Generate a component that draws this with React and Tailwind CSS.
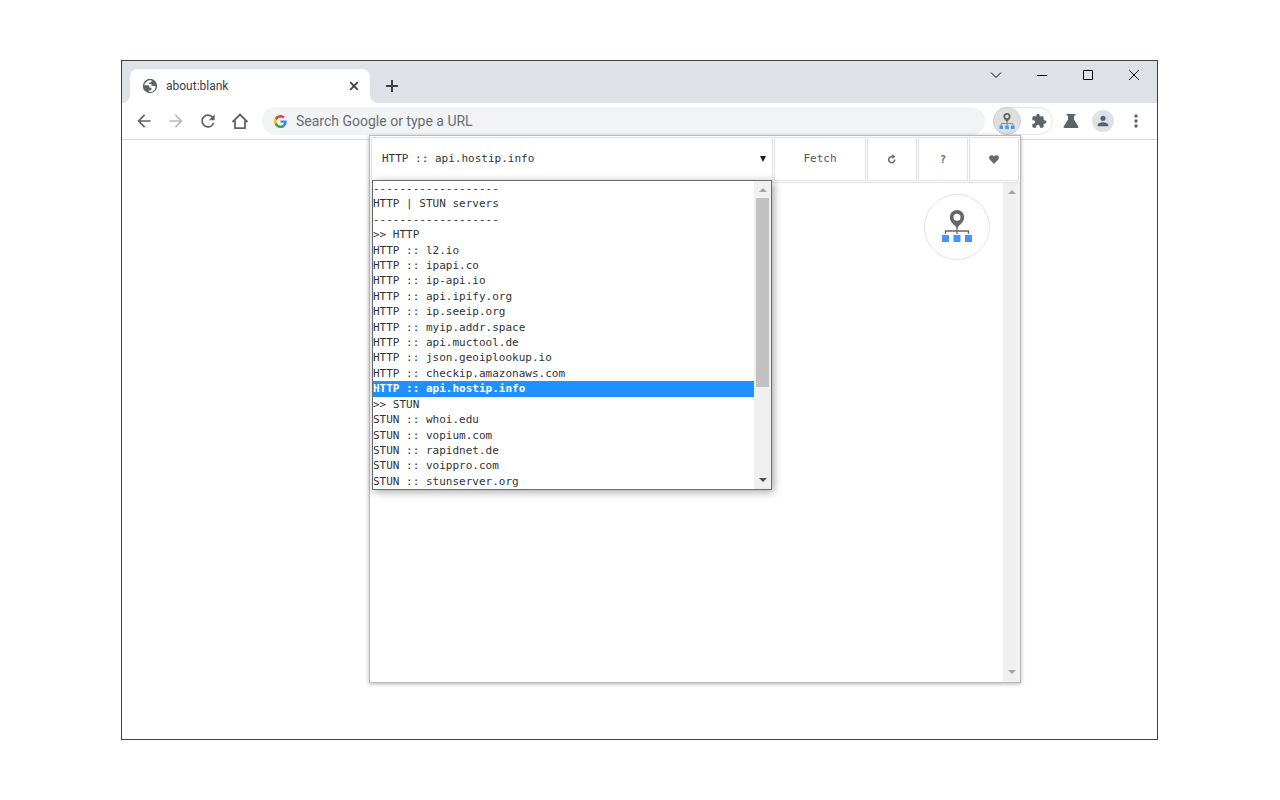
import React from "react";
import {
  MdArrowBack,
  MdArrowForward,
  MdRefresh,
  MdExtension,
  MdPerson,
  MdMoreVert,
} from "react-icons/md";

const SERVERS = [
  "-------------------",
  "HTTP | STUN servers",
  "-------------------",
  ">> HTTP",
  "HTTP :: l2.io",
  "HTTP :: ipapi.co",
  "HTTP :: ip-api.io",
  "HTTP :: api.ipify.org",
  "HTTP :: ip.seeip.org",
  "HTTP :: myip.addr.space",
  "HTTP :: api.muctool.de",
  "HTTP :: json.geoiplookup.io",
  "HTTP :: checkip.amazonaws.com",
  "HTTP :: api.hostip.info",
  ">> STUN",
  "STUN :: whoi.edu",
  "STUN :: vopium.com",
  "STUN :: rapidnet.de",
  "STUN :: voippro.com",
  "STUN :: stunserver.org",
];

const SELECTED = "HTTP :: api.hostip.info";

/* Map pin above three network nodes */
const NetworkPin = ({ className }) => (
  <svg viewBox="0 0 32 34" className={className} aria-hidden="true">
    <path
      fillRule="evenodd"
      fill="#666"
      d="M16 0a7.200 7.200 0 0 0-7.200 7.200c0 2.800 1.500 5 3.300 6.800 1.500 1.500 3 2.600 3.900 4.200.9-1.600 2.400-2.700 3.900-4.200 1.800-1.800 3.300-4 3.300-6.800A7.200 7.200 0 0 0 16 0zm0 3.700a3.500 3.500 0 1 1 0 7 3.500 3.500 0 0 1 0-7z"
    />
    <path d="M4.500 24v-3h23v3M16 16v8" fill="none" stroke="#666" strokeWidth="1.300" />
    <path d="M1 25h7v7H1zM12.500 25h7v7h-7zM24 25h7v7h-7z" fill="#4096fb" />
  </svg>
);

const GoogleLogo = () => (
  <svg viewBox="0 0 48 48" className="h-[13px] w-[13px]" aria-hidden="true">
    <path fill="#ea4335" d="M24 9.5c3.5 0 6.700 1.200 9.200 3.600l6.900-6.900C35.900 2.400 30.500 0 24 0 14.600 0 6.500 5.400 2.600 13.200l8 6.200C12.400 13.700 17.700 9.500 24 9.500z" />
    <path fill="#4285f4" d="M47 24.500c0-1.600-.2-3.100-.4-4.500H24v9h12.900c-.6 3-2.300 5.500-4.800 7.200l7.700 6C44.400 38 47 31.800 47 24.500z" />
    <path fill="#fbbc05" d="M10.500 28.600a14.500 14.500 0 0 1 0-9.200l-8-6.200a24 24 0 0 0 0 21.600l8-6.200z" />
    <path fill="#34a853" d="M24 48c6.500 0 11.900-2.100 15.900-5.800l-7.700-6c-2.200 1.500-4.900 2.300-8.200 2.300-6.300 0-11.600-4.200-13.500-9.900l-8 6.200C6.500 42.600 14.600 48 24 48z" />
  </svg>
);

const Globe = () => (
  <svg viewBox="0 0 16 16" className="h-4 w-4" aria-hidden="true">
    <circle cx="8" cy="8" r="7.200" fill="#5f6368" />
    <path
      d="M9.500 2.200C6 1.700 2.900 3.800 2.200 7.300h3.600c1 0 1.600.7 1.600 1.500v1h2v1.500c0 .7-.8 1.100-1.700 1.100H6.800v1.400c3.300.6 6.300-1.200 6.900-4.600 0-.9-.8-1.300-1.600-1.300h-1.300c-.9 0-1.400-.6-1.400-1.300V6H7.200V4.500h1.300c.8 0 1-.5 1-1.200z"
      fill="#fff"
    />
  </svg>
);

const TitleBar = () => (
  <div className="flex h-[42px] justify-between bg-[#dee1e6]">
    <div className="flex items-end">
      <div className="h-2 w-2 bg-white">
        <div className="h-2 w-2 rounded-br-lg bg-[#dee1e6]"></div>
      </div>
      <div className="flex h-[34px] w-60 items-center rounded-t-lg bg-white pr-[10px] pl-3 text-[#3c4043]">
        <Globe />
        <span className="ml-2 flex-1 text-[12px]">about:blank</span>
        <button type="button" aria-label="Close tab">
          <svg viewBox="0 0 12 12" className="h-3 w-3" fill="none" stroke="#3c4043" strokeWidth="1.700">
            <path d="M2.200 2.200l7.600 7.600M9.800 2.200L2.200 9.800" />
          </svg>
        </button>
      </div>
      <div className="h-2 w-2 bg-white">
        <div className="h-2 w-2 rounded-bl-lg bg-[#dee1e6]"></div>
      </div>
      <div className="flex h-[34px] items-center pl-2">
        <button type="button" aria-label="New tab">
          <svg viewBox="0 0 12 12" className="h-3 w-3" fill="none" stroke="#3c4043" strokeWidth="2">
            <path d="M6 0v12M0 6h12" />
          </svg>
        </button>
      </div>
    </div>
    <div className="flex h-7 items-center">
      <button type="button" aria-label="Search tabs" className="flex w-[46px] justify-center">
        <svg viewBox="0 0 12 12" className="h-3 w-3" fill="none" stroke="#000">
          <path d="M1 3.500l5 5 5-5" />
        </svg>
      </button>
      <button type="button" aria-label="Minimize" className="flex w-[46px] justify-center">
        <svg viewBox="0 0 12 12" className="h-3 w-3" fill="none" stroke="#000">
          <path d="M1 6.500h10" />
        </svg>
      </button>
      <button type="button" aria-label="Maximize" className="flex w-[46px] justify-center">
        <svg viewBox="0 0 12 12" className="h-3 w-3" fill="none" stroke="#000">
          <path d="M1.500 1.500h9v9h-9z" />
        </svg>
      </button>
      <button type="button" aria-label="Close" className="flex w-[46px] justify-center">
        <svg viewBox="0 0 12 12" className="h-3 w-3" fill="none" stroke="#000">
          <path d="M1 1l10 10M11 1L1 11" />
        </svg>
      </button>
    </div>
  </div>
);

const AddressBar = () => (
  <div className="flex h-[37px] items-center border-b border-[#d9dbde] pr-[11px] pl-3 text-[#5f6368]">
    <button type="button" aria-label="Back" className="mr-3">
      <MdArrowBack className="h-5 w-5" />
    </button>
    <button type="button" aria-label="Forward" className="mr-3 text-[#babcbe]">
      <MdArrowForward className="h-5 w-5" />
    </button>
    <button type="button" aria-label="Reload" className="mr-3">
      <MdRefresh className="h-5 w-5" />
    </button>
    <button type="button" aria-label="Home" className="mr-3">
      <svg viewBox="0 0 20 20" className="h-5 w-5" fill="none" stroke="currentColor" strokeWidth="1.800">
        <path d="M2.500 11L10 3.500l7.500 7.500M5 9.500v7.600h10V9.500" />
      </svg>
    </button>
    <label className="flex h-7 flex-1 items-center rounded-full bg-[#f1f3f4] pl-3">
      <GoogleLogo />
      <input
        type="text"
        aria-label="Address"
        placeholder="Search Google or type a URL"
        className="ml-[9px] flex-1 bg-transparent text-[14px] outline-none placeholder:text-[#6a6e73]"
      />
    </label>
    <div className="ml-2 flex h-7 w-15 items-center rounded-full border border-[#e3e4e6]">
      <button
        type="button"
        aria-label="IP lookup extension"
        className="-ml-px flex h-7 w-7 items-center justify-center rounded-full border border-[#cfcfcf] bg-[#dfdfdf]"
      >
        <NetworkPin className="h-[17px] w-4" />
      </button>
      <button type="button" aria-label="Extensions" className="ml-[10px]">
        <MdExtension className="h-4 w-4" />
      </button>
    </div>
    <button type="button" aria-label="Labs" className="ml-[10px]">
      <svg viewBox="0 0 16 16" className="h-4 w-4" fill="currentColor">
        <path d="M3.500 1h9v1.600H11v4l4.300 7c.5.800.1 1.400-.8 1.400h-13c-.9 0-1.300-.6-.8-1.400l4.300-7v-4H3.500z" />
      </svg>
    </button>
    <button
      type="button"
      aria-label="Profile"
      className="ml-[13px] flex h-[22px] w-[22px] items-center justify-center rounded-full bg-[#dee1e6] text-[#56627a]"
    >
      <MdPerson className="h-4 w-4" />
    </button>
    <button type="button" aria-label="Menu" className="ml-3">
      <MdMoreVert className="h-5 w-5" />
    </button>
  </div>
);

const ServerList = () => (
  <div className="absolute top-11 left-[2px] flex h-[310px] w-[400px] border border-[#6b6b6b] bg-white shadow-[2px_2px_8px_rgba(0,0,0,0.35)]">
    <ul role="listbox" aria-label="Servers" className="flex flex-1 flex-col">
      {SERVERS.map((name, i) => (
        <li
          key={i}
          role="option"
          aria-selected={name === SELECTED}
          className={
            name === SELECTED
              ? "flex-1 bg-[#1e90ff] leading-[15px] font-bold whitespace-pre text-white"
              : "flex-1 leading-[15px] whitespace-pre text-[#333]"
          }
        >
          {name}
        </li>
      ))}
    </ul>
    <div className="flex w-[17px] flex-col items-center bg-[#f0f0f0]">
      <div className="flex h-[17px] items-center">
        <div className="border-x-4 border-b-4 border-x-transparent border-b-[#a3a3a3]"></div>
      </div>
      <div className="h-[189px] w-[13px] bg-[#c1c1c1]"></div>
      <div className="mt-auto flex h-[18px] items-center">
        <div className="border-x-4 border-t-4 border-x-transparent border-t-[#505050]"></div>
      </div>
    </div>
  </div>
);

const cell = "flex items-center justify-center border border-[#e2e2e2]";

const Popup = () => (
  <div className="absolute -top-[5px] right-[136px] flex h-[548px] w-[652px] flex-col border border-[#b9b9b9] bg-white font-['DejaVu_Sans_Mono','Liberation_Mono',monospace] text-[11px] text-[#555] shadow-[0_1px_4px_rgba(0,0,0,0.3)]">
    <div className="flex h-[47px] gap-px border-b border-[#e2e2e2] p-px">
      <div className="relative flex-1 border border-[#e2e2e2]">
        <select
          aria-label="Server"
          defaultValue={SELECTED}
          className="h-full w-full appearance-none bg-transparent pl-[10px] text-[#333] outline-none"
        >
          {SERVERS.slice(3).map((name) => (
            <option key={name}>{name}</option>
          ))}
        </select>
        <span className="pointer-events-none absolute inset-y-0 right-[6px] flex items-center">
          <svg viewBox="0 0 6 6" className="h-[6px] w-[6px]" fill="#222">
            <path d="M0 0h6L3 6z" />
          </svg>
        </span>
      </div>
      <button type="button" className={`${cell} w-[92px]`}>
        Fetch
      </button>
      <button type="button" aria-label="Reload" className={`${cell} w-[50px]`}>
        <svg viewBox="0 0 10 10" className="h-[10px] w-[10px]" fill="none" stroke="#6b6b6b" strokeWidth="1.600">
          <path d="M7.700 5.500A3 3 0 1 1 5 2.700h1.500" />
          <path d="M5.300 0L8.300 2.700 5.300 5z" fill="#6b6b6b" stroke="none" />
        </svg>
      </button>
      <button type="button" className={`${cell} w-[50px] text-[10px] font-bold text-[#6b6b6b]`}>
        ?
      </button>
      <button type="button" aria-label="Donate" className={`${cell} w-[50px]`}>
        <svg viewBox="0 0 10 9" className="h-[9px] w-[10px]" fill="#6b6b6b">
          <path d="M5 9L.8 4.700C-.5 3.200 0 .5 2.400.3 3.600.2 4.500.8 5 1.600 5.500.8 6.400.2 7.600.3 10 .5 10.500 3.200 9.200 4.700z" />
        </svg>
      </button>
    </div>
    <div className="flex flex-1 justify-end">
      <div className="mt-[11px] mr-[13px] flex h-[66px] w-[66px] items-center justify-center rounded-full border border-[#e2e2e2]">
        <NetworkPin className="h-[34px] w-8" />
      </div>
      <div className="flex w-[17px] flex-col items-center justify-between bg-[#f0f0f0]">
        <div className="flex h-[17px] items-center">
          <div className="border-x-4 border-b-4 border-x-transparent border-b-[#a3a3a3]"></div>
        </div>
        <div className="flex h-5 items-center">
          <div className="border-x-4 border-t-4 border-x-transparent border-t-[#a3a3a3]"></div>
        </div>
      </div>
    </div>
    <ServerList />
  </div>
);

export default function App() {
  return (
    <div className="flex min-h-screen flex-col bg-white py-[60px] pr-[122px] pl-[121px] font-['Roboto','Noto_Sans',sans-serif]">
      <div className="flex flex-1 flex-col border border-[#3f4042]">
        <TitleBar />
        <AddressBar />
        <main className="relative min-h-[560px] flex-1">
          <Popup />
        </main>
      </div>
    </div>
  );
}
